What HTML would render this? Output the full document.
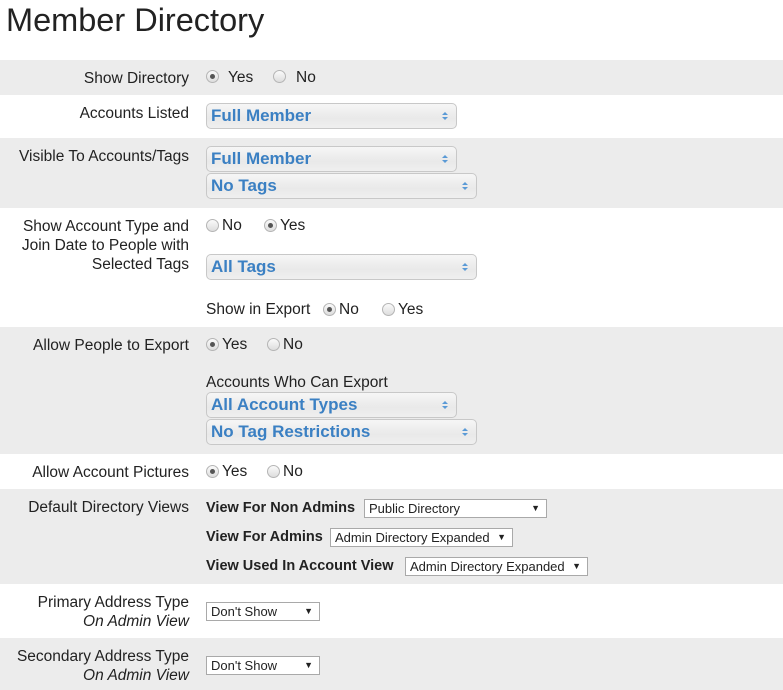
<!DOCTYPE html>
<html><head><style>
body{margin:0;width:783px;height:690px;background:#fff;font-family:"Liberation Sans",sans-serif;color:#222;position:relative;overflow:hidden}
.a{position:absolute;white-space:nowrap}
.g{position:absolute;left:0;width:783px;background:#ececec}
.l{position:absolute;right:594px;text-align:right;font-size:15.5px;line-height:19px;white-space:nowrap}
.t{position:absolute;font-size:15.5px;white-space:nowrap;line-height:18px}
.r{position:absolute;width:11px;height:11px;border:1px solid #b5b5b5;border-radius:50%;background:linear-gradient(#fafafa,#ddd)}
.r.c::after{content:"";position:absolute;left:3px;top:3px;width:5px;height:5px;border-radius:50%;background:#555}
.s{position:absolute;left:206px;height:24px;border:1px solid #c8c8c8;border-radius:5px;background:linear-gradient(#f6f6f6,#e9e9e9 60%,#efefef);color:#3b80c3;font-weight:bold;font-size:17px;line-height:24px;padding-left:4px;box-sizing:content-box}
.s::after{content:"";position:absolute;right:8px;top:8px;width:0;height:0;border-left:3px solid transparent;border-right:3px solid transparent;border-bottom:3px solid #5a9ad6}
.s i{position:absolute;right:8px;top:13px;width:0;height:0;border-left:3px solid transparent;border-right:3px solid transparent;border-top:3px solid #5a9ad6}
.n{position:absolute;border:1px solid #a9a9a9;background:#fff;font-size:13px;line-height:17px;padding-left:4px;box-sizing:border-box;height:19px}
.n::after{content:"▼";position:absolute;right:6px;top:0;font-size:9px}
.b{font-weight:bold;font-size:14.5px}
</style></head><body>
<div class="a" style="left:6px;top:2px;font-size:32.5px;color:#222">Member Directory</div>
<div class="g" style="top:60px;height:35px"></div>
<div class="g" style="top:138px;height:70px"></div>
<div class="g" style="top:327px;height:127px"></div>
<div class="g" style="top:489px;height:95px"></div>
<div class="g" style="top:638px;height:52px"></div>

<div class="l" style="top:69px">Show Directory</div>
<div class="r c" style="left:206px;top:70px"></div><div class="t" style="left:228px;top:69px">Yes</div>
<div class="r" style="left:273px;top:70px"></div><div class="t" style="left:296px;top:69px">No</div>

<div class="l" style="top:104px">Accounts Listed</div>
<div class="s" style="top:103px;width:245px">Full Member<i></i></div>

<div class="l" style="top:147px">Visible To Accounts/Tags</div>
<div class="s" style="top:146px;width:245px">Full Member<i></i></div>
<div class="s" style="top:173px;width:265px">No Tags<i></i></div>

<div class="l" style="top:217px">Show Account Type and<br>Join Date to People with<br>Selected Tags</div>
<div class="r" style="left:206px;top:219px"></div><div class="t" style="left:222px;top:217px">No</div>
<div class="r c" style="left:264px;top:219px"></div><div class="t" style="left:280px;top:217px">Yes</div>
<div class="s" style="top:254px;width:265px">All Tags<i></i></div>
<div class="t" style="left:206px;top:301px">Show in Export</div>
<div class="r c" style="left:323px;top:303px"></div><div class="t" style="left:339px;top:301px">No</div>
<div class="r" style="left:382px;top:303px"></div><div class="t" style="left:398px;top:301px">Yes</div>

<div class="l" style="top:336px">Allow People to Export</div>
<div class="r c" style="left:206px;top:338px"></div><div class="t" style="left:222px;top:336px">Yes</div>
<div class="r" style="left:267px;top:338px"></div><div class="t" style="left:283px;top:336px">No</div>
<div class="t" style="left:206px;top:374px">Accounts Who Can Export</div>
<div class="s" style="top:392px;width:245px">All Account Types<i></i></div>
<div class="s" style="top:419px;width:265px">No Tag Restrictions<i></i></div>

<div class="l" style="top:463px">Allow Account Pictures</div>
<div class="r c" style="left:206px;top:465px"></div><div class="t" style="left:222px;top:463px">Yes</div>
<div class="r" style="left:267px;top:465px"></div><div class="t" style="left:283px;top:463px">No</div>

<div class="l" style="top:498px">Default Directory Views</div>
<div class="t b" style="left:206px;top:499px">View For Non Admins</div>
<div class="n" style="left:364px;top:499px;width:183px">Public Directory</div>
<div class="t b" style="left:206px;top:528px">View For Admins</div>
<div class="n" style="left:330px;top:528px;width:183px">Admin Directory Expanded</div>
<div class="t b" style="left:206px;top:557px">View Used In Account View</div>
<div class="n" style="left:405px;top:557px;width:183px">Admin Directory Expanded</div>

<div class="l" style="top:593px">Primary Address Type<br><i>On Admin View</i></div>
<div class="n" style="left:206px;top:602px;width:114px">Don't Show</div>
<div class="l" style="top:647px">Secondary Address Type<br><i>On Admin View</i></div>
<div class="n" style="left:206px;top:656px;width:114px">Don't Show</div>
</body></html>
